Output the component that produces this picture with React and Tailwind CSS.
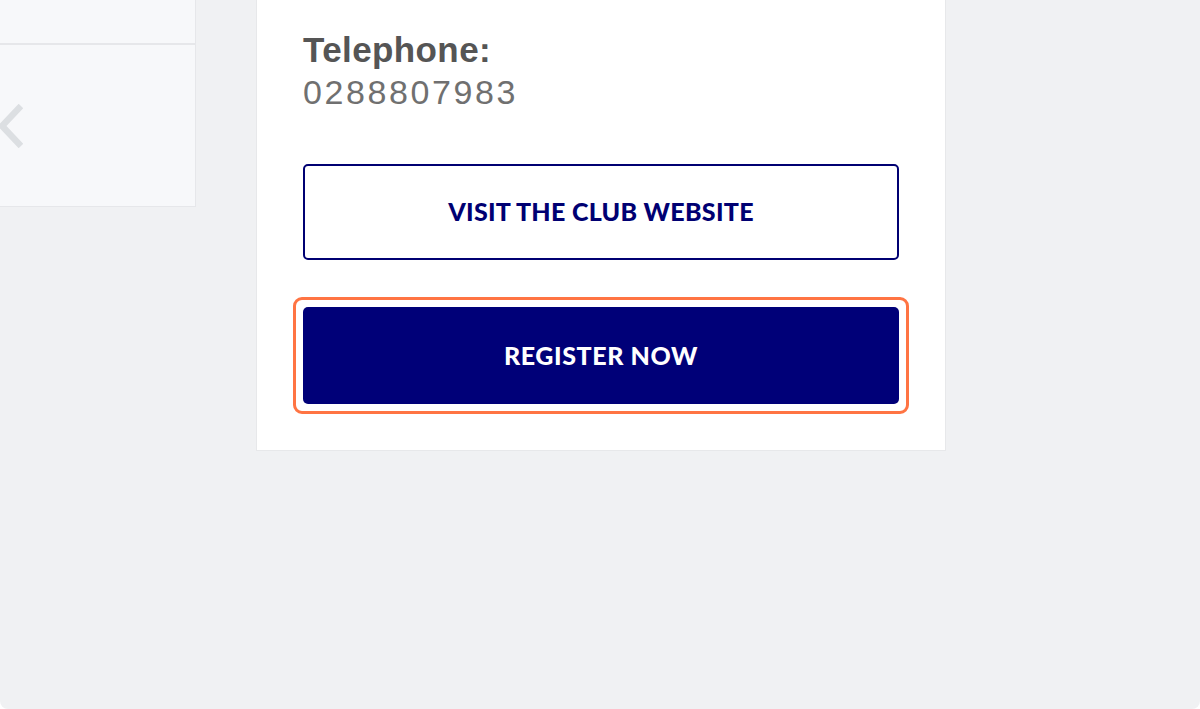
import React from 'react';

function ChevronLeft() {
  return (
    <svg width="26" height="44" viewBox="0 0 26 44" fill="none">
      <path d="M24 2 L5 22 L24 42" stroke="#dcdfe2" strokeWidth="6.5" />
    </svg>
  );
}

function App() {
  return (
    <div className="w-[1200px] h-[709px] bg-[#f0f1f3] flex items-start overflow-hidden rounded-b-lg">
      {/* Side panel */}
      <div className="w-[196px] h-[207px] bg-[#f7f8fa] border-r border-b border-[#e6e7ea] flex flex-col">
        <div className="h-[45px] border-b-2 border-[#e6e7ea]" />
        <div className="flex-1 flex items-center -ml-[3px]">
          <ChevronLeft />
        </div>
      </div>

      {/* Card */}
      <div className="ml-[60px] w-[690px] h-[451px] bg-white border border-t-0 border-[#e7e8ea] px-[46px] pt-[29px] font-['Liberation_Sans',Arial,sans-serif]">
        <div className="text-[35px] leading-[42px] font-bold text-[#555555] tracking-[0.4px]">Telephone:</div>
        <div className="text-[34px] leading-[42px] tracking-[2.6px] text-[#707070]">0288807983</div>

        <button className="mt-[51px] w-full h-[96px] rounded-[5px] border-[2px] border-[#000072] bg-white flex items-center justify-center font-['Lato',sans-serif] font-black text-[25px] text-[#000072] tracking-[0.3px]">
          VISIT THE CLUB WEBSITE
        </button>

        <div className="relative mt-[47px]">
          <button className="w-full h-[97px] rounded-[5px] bg-[#000078] flex items-center justify-center font-['Lato',sans-serif] font-black text-[25px] text-white tracking-[0.6px]">
            REGISTER NOW
          </button>
          <div className="absolute -inset-x-[10px] -inset-y-[10px] rounded-[9px] border-[3px] border-[#ff7443] pointer-events-none" />
        </div>
      </div>
    </div>
  );
}

export default App;
